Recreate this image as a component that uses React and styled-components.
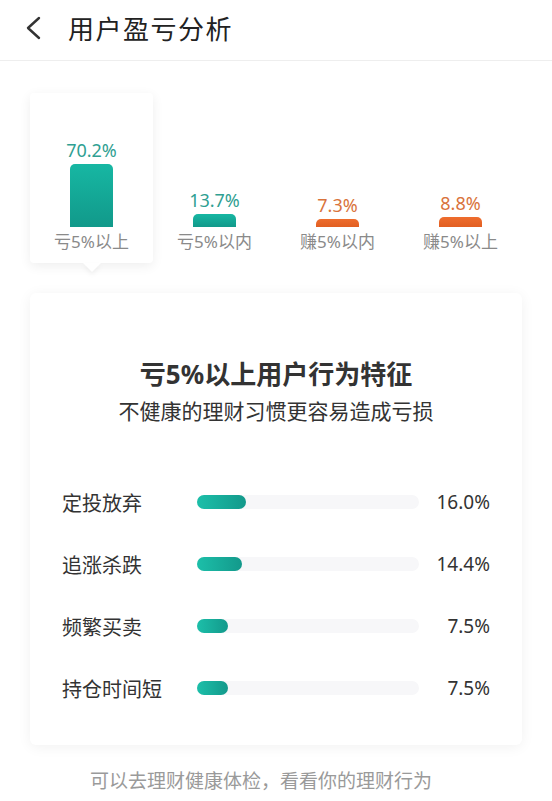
import React from 'react';
import styled, { createGlobalStyle, css } from 'styled-components';

const GlobalStyle = createGlobalStyle`
  body {
    margin: 0;
    background: #ffffff;
    font-family: "Noto Sans", "Noto Sans CJK SC", sans-serif;
    color: #333;
  }
`;

const Page = styled.div`
  width: 552px;
  min-height: 801px;
  background: #fff;
`;

const Header = styled.header`
  height: 60px;
  display: flex;
  align-items: center;
  padding-left: 24px;
  border-bottom: 1px solid #eeeeee;
`;

const BackButton = styled.button`
  border: 0;
  background: none;
  padding: 0;
  width: 20px;
  height: 26px;
  display: flex;
  align-items: center;
  margin-right: 24px;
  margin-top: -4px;
`;

const Title = styled.h1`
  margin: 0;
  margin-top: -5px;
  font-size: 26px;
  font-weight: 400;
  color: #222;
  letter-spacing: 1.5px;
`;

const Chart = styled.div`
  display: flex;
  padding: 0 30px;
  margin-top: 32px;
`;

const Column = styled.div`
  position: relative;
  width: 123px;
  height: 170px;
  display: flex;
  flex-direction: column;
  align-items: center;
  justify-content: flex-end;
  padding-bottom: 11px;
  box-sizing: border-box;
  border-radius: 4px;

  ${(p) =>
    p.$active &&
    css`
      background: #fff;
      box-shadow: 0 3px 12px rgba(0, 0, 0, 0.07);

      &::after {
        content: '';
        position: absolute;
        left: 50%;
        bottom: -9px;
        margin-left: -9px;
        border-left: 9px solid transparent;
        border-right: 9px solid transparent;
        border-top: 9px solid #fff;
        filter: drop-shadow(0 3px 2px rgba(0, 0, 0, 0.05));
      }
    `}
`;

const Value = styled.div`
  font-size: 18px;
  line-height: 22px;
  margin-bottom: 3px;
  color: ${(p) => (p.$tone === 'gain' ? '#d9733b' : '#2fa092')};
`;

const Bar = styled.div`
  width: 43px;
  border-radius: 5px 5px 0 0;
  background: ${(p) =>
    p.$tone === 'gain'
      ? 'linear-gradient(180deg, #ee6d2e, #e25f22)'
      : 'linear-gradient(180deg, #17b7a3, #11998a)'};
`;

const Label = styled.div`
  margin-top: 5px;
  font-size: 17px;
  line-height: 20px;
  color: #8a8a8a;
`;

const Card = styled.section`
  margin: 30px 30px 0;
  padding: 66px 32px 26px;
  border-radius: 6px;
  background: #fff;
  box-shadow: 0 2px 14px rgba(0, 0, 0, 0.06);
`;

const CardTitle = styled.h2`
  margin: 0;
  text-align: center;
  font-size: 26px;
  line-height: 30px;
  font-weight: 700;
  color: #333;
`;

const CardSubtitle = styled.p`
  margin: 10px 0 0;
  text-align: center;
  font-size: 21px;
  line-height: 24px;
  color: #333;
`;

const Rows = styled.div`
  margin-top: 48px;
`;

const Row = styled.div`
  display: flex;
  align-items: center;
  height: 62px;
`;

const RowLabel = styled.div`
  width: 135px;
  font-size: 20px;
  color: #333;
`;

const Track = styled.div`
  width: 222px;
  height: 14px;
  border-radius: 7px;
  background: #f7f7f9;
`;

const Fill = styled.div`
  height: 100%;
  border-radius: 7px;
  background: linear-gradient(90deg, #1cbfa9, #13998b);
`;

const RowValue = styled.div`
  flex: 1;
  text-align: right;
  font-size: 19px;
  color: #333;
`;

const Footer = styled.p`
  margin: 24px 0 0;
  padding-right: 30px;
  text-align: center;
  font-size: 19px;
  line-height: 24px;
  color: #9a9a9a;
`;

const groups = [
  { label: '亏5%以上', value: '70.2%', height: 63, tone: 'loss', active: true },
  { label: '亏5%以内', value: '13.7%', height: 13, tone: 'loss' },
  { label: '赚5%以内', value: '7.3%', height: 8, tone: 'gain' },
  { label: '赚5%以上', value: '8.8%', height: 10, tone: 'gain' },
];

const behaviours = [
  { label: '定投放弃', value: '16.0%', width: 49 },
  { label: '追涨杀跌', value: '14.4%', width: 45 },
  { label: '频繁买卖', value: '7.5%', width: 31 },
  { label: '持仓时间短', value: '7.5%', width: 31 },
];

const App = () => (
  <Page>
    <GlobalStyle />
    <Header>
      <BackButton aria-label="返回">
        <svg width="18" height="24" viewBox="0 0 18 24">
          <path d="M15 2 L4 12 L15 22" fill="none" stroke="#333" strokeWidth="2.4" strokeLinecap="round" strokeLinejoin="round" />
        </svg>
      </BackButton>
      <Title>用户盈亏分析</Title>
    </Header>

    <Chart>
      {groups.map((g) => (
        <Column key={g.label} $active={g.active}>
          <Value $tone={g.tone}>{g.value}</Value>
          <Bar $tone={g.tone} style={{ height: g.height }} />
          <Label>{g.label}</Label>
        </Column>
      ))}
    </Chart>

    <Card>
      <CardTitle>亏5%以上用户行为特征</CardTitle>
      <CardSubtitle>不健康的理财习惯更容易造成亏损</CardSubtitle>
      <Rows>
        {behaviours.map((b) => (
          <Row key={b.label}>
            <RowLabel>{b.label}</RowLabel>
            <Track>
              <Fill style={{ width: b.width }} />
            </Track>
            <RowValue>{b.value}</RowValue>
          </Row>
        ))}
      </Rows>
    </Card>

    <Footer>可以去理财健康体检，看看你的理财行为</Footer>
  </Page>
);

export default App;
